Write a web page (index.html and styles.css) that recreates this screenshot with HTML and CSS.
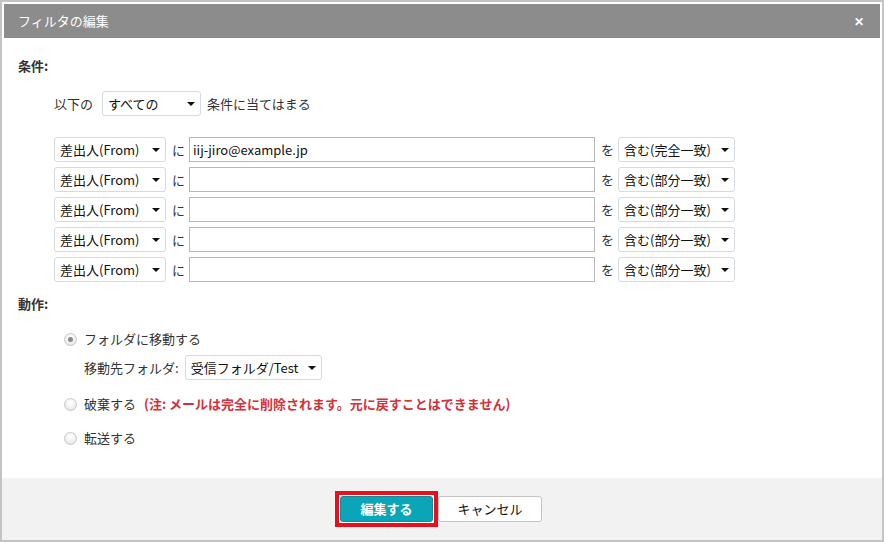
FILE: index.html
```html
<!DOCTYPE html>
<html lang="ja">
<head>
<meta charset="utf-8">
<title>フィルタの編集</title>
<link rel="stylesheet" href="styles.css">
</head>
<body>
<div class="dialog">
  <div class="titlebar">
    <span class="title">フィルタの編集</span>
    <span class="close">✕</span>
  </div>
  <div class="content">
    <div class="heading">条件:</div>
    <div class="match-row">
      <span class="label">以下の</span>
      <div class="select sel-all"><span>すべての</span><i class="arrow"></i></div>
      <span class="label">条件に当てはまる</span>
    </div>
    <div class="rules">
      <div class="rule">
        <div class="select sel-field"><span>差出人(From)</span><i class="arrow"></i></div>
        <span class="label ni">に</span>
        <div class="input">iij-jiro@example.jp</div>
        <span class="label wo">を</span>
        <div class="select sel-op"><span>含む(完全一致)</span><i class="arrow"></i></div>
      </div>
      <div class="rule">
        <div class="select sel-field"><span>差出人(From)</span><i class="arrow"></i></div>
        <span class="label ni">に</span>
        <div class="input"></div>
        <span class="label wo">を</span>
        <div class="select sel-op"><span>含む(部分一致)</span><i class="arrow"></i></div>
      </div>
      <div class="rule">
        <div class="select sel-field"><span>差出人(From)</span><i class="arrow"></i></div>
        <span class="label ni">に</span>
        <div class="input"></div>
        <span class="label wo">を</span>
        <div class="select sel-op"><span>含む(部分一致)</span><i class="arrow"></i></div>
      </div>
      <div class="rule">
        <div class="select sel-field"><span>差出人(From)</span><i class="arrow"></i></div>
        <span class="label ni">に</span>
        <div class="input"></div>
        <span class="label wo">を</span>
        <div class="select sel-op"><span>含む(部分一致)</span><i class="arrow"></i></div>
      </div>
      <div class="rule">
        <div class="select sel-field"><span>差出人(From)</span><i class="arrow"></i></div>
        <span class="label ni">に</span>
        <div class="input"></div>
        <span class="label wo">を</span>
        <div class="select sel-op"><span>含む(部分一致)</span><i class="arrow"></i></div>
      </div>
    </div>
    <div class="heading heading-action">動作:</div>
    <div class="actions">
      <div class="radio-row r1"><span class="radio checked"></span><span>フォルダに移動する</span></div>
      <div class="folder-row">
        <span class="label">移動先フォルダ:</span>
        <div class="select sel-folder"><span>受信フォルダ/Test</span><i class="arrow"></i></div>
      </div>
      <div class="radio-row r2"><span class="radio"></span><span>破棄する</span><span class="note">(注: メールは完全に削除されます。元に戻すことはできません)</span></div>
      <div class="radio-row r3"><span class="radio"></span><span>転送する</span></div>
    </div>
  </div>
  <div class="footer">
    <div class="focus-ring"><button class="btn btn-primary">編集する</button></div>
    <button class="btn btn-cancel">キャンセル</button>
  </div>
</div>
</body>
</html>
```
FILE: styles.css
```css
* { box-sizing: border-box; }
html, body { margin: 0; padding: 0; }
body {
  width: 884px;
  height: 542px;
  background: #c3c3c3;
  padding: 2px;
  font-family: "Noto Sans CJK JP", "Noto Sans", sans-serif;
  font-size: 13px;
  color: #222;
}
.dialog {
  width: 880px;
  height: 538px;
  background: #fff;
  display: flex;
  flex-direction: column;
}
.titlebar {
  margin: 2px 2px 0 2px;
  height: 34px;
  background: #8c8c8c;
  display: flex;
  align-items: center;
  justify-content: space-between;
  padding: 0 16px 0 14px;
  color: #fff;
}
.title { font-size: 13px; line-height: 20px; }
.close { font-size: 12px; font-weight: bold; line-height: 12px; }
.content {
  flex: 1;
  padding: 18px 0 0 16px;
}
.heading {
  font-weight: bold;
  font-size: 13px;
  line-height: 20px;
  color: #333;
}
.label { color: #333; line-height: 20px; white-space: nowrap; }
.match-row {
  margin-top: 15px;
  padding-left: 36px;
  display: flex;
  align-items: center;
  height: 25px;
}
.match-row .sel-all { margin: 0 6px 0 9px; }
.select {
  height: 25px;
  border: 1px solid #d4dbe3;
  border-radius: 3px;
  background: #fff;
  display: flex;
  align-items: center;
  justify-content: space-between;
  padding: 0 5px 0 5px;
  line-height: 20px;
  color: #111;
  white-space: nowrap;
}
.arrow {
  width: 0;
  height: 0;
  border-left: 4px solid transparent;
  border-right: 4px solid transparent;
  border-top: 4px solid #111;
  margin-top: 1px;
}
.sel-all { width: 99px; }
.sel-field { width: 112px; }
.sel-op { width: 117px; }
.sel-folder { width: 137px; margin-left: 6px; }
.rules {
  margin-top: 21px;
  padding-left: 36px;
  display: flex;
  flex-direction: column;
  gap: 5px;
}
.rule {
  display: flex;
  align-items: center;
  height: 25px;
}
.rule .ni { margin: 0 5px 0 6px; width: 12px; }
.rule .wo { margin: 0 4px 0 6px; width: 13px; }
.input {
  width: 406px;
  height: 25px;
  border: 1px solid #b8b8b8;
  padding: 0 3px;
  line-height: 23px;
  color: #111;
}
.heading-action { margin-top: 12px; }
.actions { padding-left: 46px; }
.radio-row {
  display: flex;
  align-items: center;
  height: 20px;
  line-height: 20px;
  color: #333;
}
.r1 { margin-top: 15px; }
.r2 { margin-top: 14px; }
.r3 { margin-top: 14px; }
.radio {
  width: 13px;
  height: 13px;
  border-radius: 50%;
  border: 1px solid #c8c8c8;
  background: radial-gradient(circle at 50% 35%, #ffffff 0%, #f2f2f2 50%, #dcdcdc 100%);
  margin-right: 7px;
  position: relative;
  flex: none;
}
.radio.checked::after {
  content: "";
  position: absolute;
  left: 3px;
  top: 3px;
  width: 5px;
  height: 5px;
  border-radius: 50%;
  background: #8a8a8a;
}
.folder-row {
  margin-top: 6px;
  padding-left: 20px;
  display: flex;
  align-items: center;
  height: 25px;
}
.note {
  margin-left: 8px;
  color: #d8303a;
  font-weight: bold;
}
.footer {
  height: 62px;
  background: #f2f2f2;
  display: flex;
  align-items: center;
  justify-content: center;
  padding-right: 7px;
}
.focus-ring {
  border: 4px solid #e8101c;
  padding: 1px;
  background: #fff;
  display: flex;
}
.btn {
  font-family: "Noto Sans CJK JP", "Noto Sans", sans-serif;
  font-size: 13px;
  line-height: 20px;
  margin: 0;
  cursor: pointer;
}
.btn-primary {
  width: 93px;
  height: 26px;
  background: #0aa6b7;
  border: 1px solid #17899a;
  border-radius: 3px;
  color: #fff;
  font-weight: bold;
  padding: 0;
}
.btn-cancel {
  width: 104px;
  height: 26px;
  background: #fff;
  border: 1px solid #c4c4c4;
  border-radius: 3px;
  color: #111;
  padding: 0;
}
```
